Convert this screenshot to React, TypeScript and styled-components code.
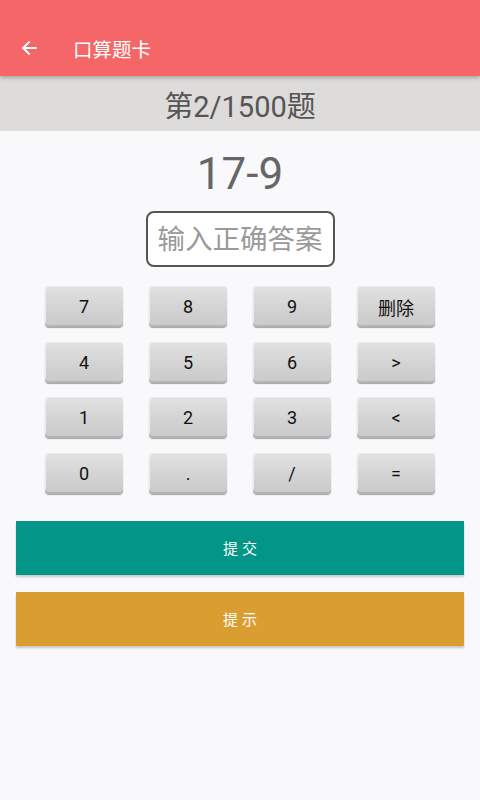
import React from "react";
import styled, { createGlobalStyle } from "styled-components";

const Global = createGlobalStyle`
  html, body { margin: 0; padding: 0; }
  body { background: #f9f8fb; font-family: Roboto, "Noto Sans CJK SC", sans-serif; }
  #root { min-height: 800px; }
`;

const Page = styled.div`
  width: 480px;
  min-height: 800px;
  background: #f9f8fb;
  display: flex;
  flex-direction: column;
`;

const AppBar = styled.header`
  height: 76px;
  background: #f46667;
  display: flex;
  align-items: center;
  padding: 20px 0 0 18px;
  box-sizing: border-box;
  box-shadow: 0 2px 4px rgba(0, 0, 0, 0.25);
  position: relative;
  z-index: 1;
`;

const BackButton = styled.div`
  width: 22px;
  height: 22px;
  display: flex;
  align-items: center;
  justify-content: center;
`;

const Title = styled.h1`
  margin: 0 0 0 33px;
  font-size: 19.5px;
  font-weight: 400;
  color: #fff;
  font-family: Roboto, "Noto Sans CJK SC", sans-serif;
`;

const Counter = styled.div`
  height: 55px;
  background: #dedbdb;
  display: flex;
  align-items: center;
  justify-content: center;
  font-size: 29px;
  color: #555;
`;

const Expression = styled.div`
  margin-top: 18px;
  text-align: center;
  font-size: 44px;
  line-height: 50px;
  color: #666;
`;

const InputRow = styled.div`
  display: flex;
  justify-content: center;
  margin-top: 12px;
`;

const AnswerInput = styled.input`
  width: 189px;
  height: 56px;
  box-sizing: border-box;
  border: 2px solid #555;
  border-radius: 8px;
  background: #fff;
  font-size: 27.5px;
  text-align: center;
  font-family: Roboto, "Noto Sans CJK SC", sans-serif;
  color: #333;
  padding: 0;
  outline: none;
  &::placeholder { color: #9a9a9a; }
`;

const Keypad = styled.div`
  display: grid;
  grid-template-columns: repeat(4, 78px);
  column-gap: 26px;
  row-gap: 14.6px;
  margin: 19px 0 0 45px;
`;

const Key = styled.button`
  height: 41px;
  border: none;
  border-radius: 4px;
  background: linear-gradient(180deg, #e2e2e2 0%, #d3d3d3 55%, #c9c9c9 100%);
  box-shadow: inset 0 -2px 0 #b3b3b3, inset 1px 1px 0 #ececec, 0 1px 1px rgba(0,0,0,0.35);
  font-size: 18px;
  color: #111;
  font-family: Roboto, "Noto Sans CJK SC", sans-serif;
  padding: 0;
`;

const Actions = styled.div`
  display: flex;
  flex-direction: column;
  gap: 17px;
  margin: 27px 16px 0;
`;

const ActionButton = styled.button<{ $bg: string }>`
  height: 54px;
  border: none;
  background: ${(p) => p.$bg};
  color: #fff;
  font-size: 15px;
  letter-spacing: 4px;
  text-indent: 4px;
  font-family: Roboto, "Noto Sans CJK SC", sans-serif;
  box-shadow: 0 2px 2px rgba(0, 0, 0, 0.2);
`;

const keys = ["7", "8", "9", "删除", "4", "5", "6", ">", "1", "2", "3", "<", "0", ".", "/", "="];

export default function App() {
  return (
    <Page>
      <Global />
      <AppBar>
        <BackButton>
          <svg width="20" height="20" viewBox="0 0 24 24" fill="none" stroke="#fff" strokeWidth="2.4" strokeLinecap="square">
            <path d="M20 12H5" />
            <path d="M12 5l-7 7 7 7" />
          </svg>
        </BackButton>
        <Title>口算题卡</Title>
      </AppBar>
      <Counter>第2/1500题</Counter>
      <Expression>17-9</Expression>
      <InputRow>
        <AnswerInput placeholder="输入正确答案" />
      </InputRow>
      <Keypad>
        {keys.map((k) => (
          <Key key={k}>{k}</Key>
        ))}
      </Keypad>
      <Actions>
        <ActionButton $bg="#039688">提交</ActionButton>
        <ActionButton $bg="#d99e2f">提示</ActionButton>
      </Actions>
    </Page>
  );
}
